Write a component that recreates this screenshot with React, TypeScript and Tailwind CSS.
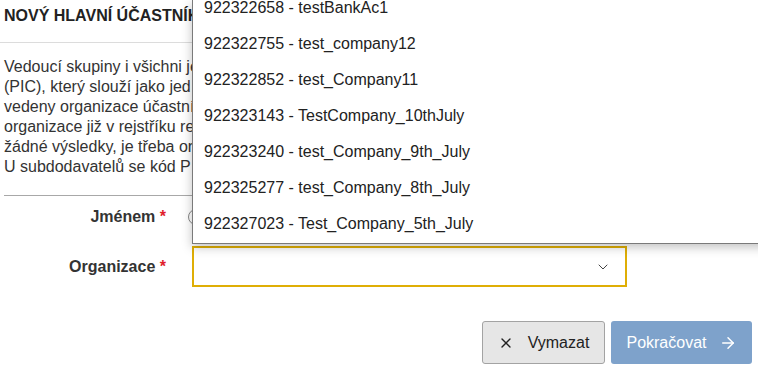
import { ArrowRight, ChevronDown, X } from "lucide-react";

const companies = [
  "922322658 - testBankAc1",
  "922322755 - test_company12",
  "922322852 - test_Company11",
  "922323143 - TestCompany_10thJuly",
  "922323240 - test_Company_9th_July",
  "922325277 - test_Company_8th_July",
  "922327023 - Test_Company_5th_July",
];

// only the start of each line shows; the open list covers the rest
const intro = [
  "Vedoucí skupiny i všichni je",
  "(PIC), který slouží jako jed",
  "vedeny organizace účastní",
  "organizace již v rejstříku re",
  "žádné výsledky, je třeba or",
  "U subdodavatelů se kód P",
];

function Label({ children }: { children: string }) {
  return (
    <div className="pr-[2px] text-right text-[16px] font-bold text-[#333]">
      {children} <span className="text-[#e0202a]">*</span>
    </div>
  );
}

export default function App() {
  return (
    <div className="relative h-[368px] w-[758px] overflow-hidden bg-white font-['Liberation_Sans',Arial,sans-serif] text-[#333]">
      <div className="h-[43px] border-b border-[#dcdcdc] px-1 pt-[6px]">
        <h2 className="w-[188px] overflow-hidden whitespace-nowrap text-[16px] font-bold uppercase leading-[20px] text-[#222]">
          Nový hlavní účastník
        </h2>
      </div>

      <p className="mt-[14px] w-[192px] overflow-hidden px-1 text-[16px] leading-[20px]">
        {intro.map((line) => (
          <span key={line} className="block whitespace-nowrap">
            {line}
          </span>
        ))}
      </p>

      <div className="mx-1 mt-[18px] border-t border-[#a8a8a8]" />

      <div className="grid grid-cols-[168px_435px] items-center gap-x-6 gap-y-[9px]">
        <Label>Jménem</Label>
        <div className="flex h-[41px] items-center">
          <span className="-ml-[4px] h-[16px] w-[16px] rounded-full border border-[#888]" />
        </div>

        <Label>Organizace</Label>
        <div className="flex h-[41px] items-center justify-end border-2 border-[#dfae05] pr-[14px]">
          <ChevronDown className="h-4 w-4 text-[#444]" strokeWidth={1.5} />
        </div>
      </div>

      <div className="mt-[34px] flex justify-end gap-[6px] pr-[6px]">
        <button className="flex h-[43px] w-[123px] items-center justify-center gap-[14px] rounded-[3px] border border-[#a3a3a3] bg-[#e6e6e6] text-[16px] text-[#222]">
          <X className="h-4 w-4" strokeWidth={2} />
          Vymazat
        </button>
        <button className="flex h-[43px] w-[141px] items-center justify-center gap-[12px] rounded-[3px] bg-[#7ea2cb] text-[16px] text-white">
          Pokračovat
          <ArrowRight className="h-[18px] w-[18px]" strokeWidth={2} />
        </button>
      </div>

      <div className="absolute left-[192px] top-0 h-[244px] w-[580px] overflow-hidden border-b border-l border-[#7a7a7a] bg-white shadow-[0_3px_10px_rgba(0,0,0,0.25)]">
        <ul className="-mt-[10px]">
          {companies.map((c) => (
            <li
              key={c}
              className="flex h-[36px] items-center whitespace-nowrap pl-[11px] text-[16px] text-[#222]"
            >
              {c}
            </li>
          ))}
        </ul>
      </div>
    </div>
  );
}
